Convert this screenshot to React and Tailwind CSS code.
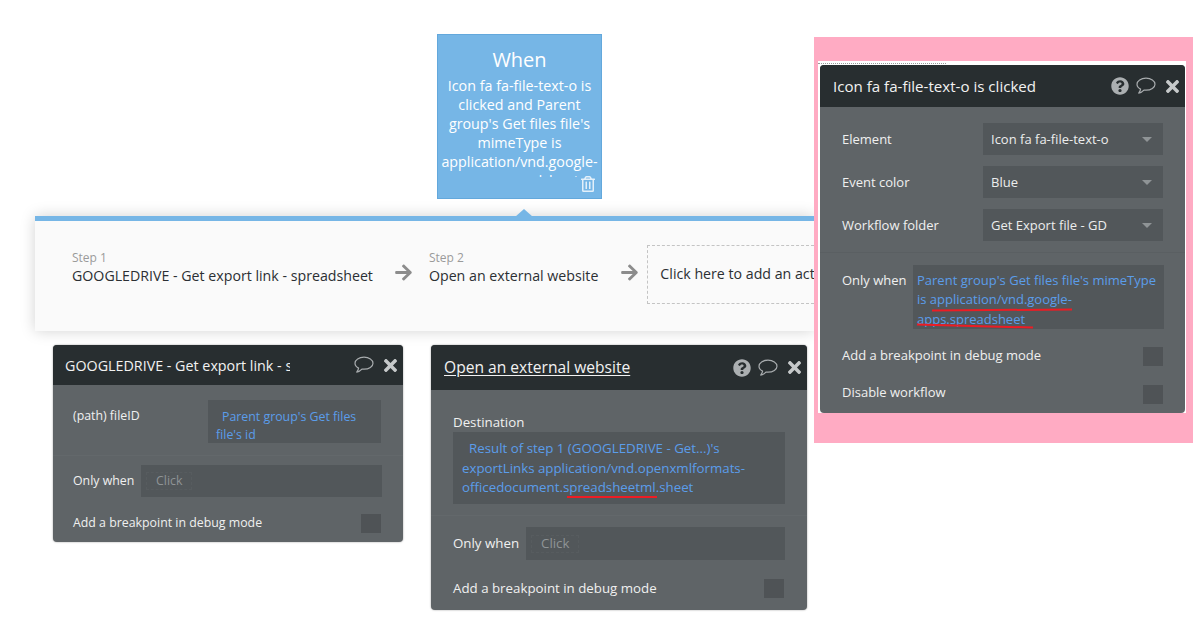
import React from "react";
import { FaQuestionCircle, FaTimes, FaArrowRight, FaRegTrashAlt } from "react-icons/fa";

const font = "font-['Open_Sans','Noto_Sans',sans-serif]";

function Bubble() {
  return (
    <svg width="20" height="18" viewBox="0 0 20 18" fill="none" className="shrink-0">
      <path
        d="M10 1.2C5 1.2 1 3.8 1 7.2c0 2 1.4 3.8 3.6 4.9-.2 1.4-1 2.9-1.900 4 2-.4 3.900-1.500 5.200-3 .7.100 1.400.100 2.100.100 5 0 9-2.700 9-6S15 1.200 10 1.200z"
        stroke="#a7abad"
        strokeWidth="1.2"
        strokeLinejoin="round"
      />
    </svg>
  );
}

function HeaderIcons({ help }) {
  return (
    <div className="flex items-center gap-[7px]">
      {help && <FaQuestionCircle className="text-[18px] text-[#abafb1]" />}
      <Bubble />
      <FaTimes className="text-[19px] text-[#c6c9ca]" />
    </div>
  );
}

function Check() {
  return <div className="w-[20px] h-[19px] bg-[#4f5356] shrink-0" />;
}

function Select({ children }) {
  return (
    <div className="w-[180px] h-[32px] bg-[#52575a] flex items-center justify-between pl-[8px] pr-[11px] text-[#eceded]">
      <span className="mt-[2px]">{children}</span>
      <span className="w-0 h-0 border-x-[5px] border-x-transparent border-t-[5px] border-t-[#8f9496]" />
    </div>
  );
}

function ClickField() {
  return (
    <div className="flex-1 bg-[#52575a] flex items-center pl-[5px] text-[#8f9496]">
      <span className="px-[9px] h-[18px] flex items-center border border-dashed border-[#575c5f]">Click</span>
    </div>
  );
}

function Redline({ className }) {
  return <span className={`absolute bg-[#ed1c24] ${className}`} />;
}

export default function App() {
  return (
    <div className={`relative w-[1200px] h-[623px] overflow-hidden bg-white ${font}`}>
      {/* Action bar */}
      <div className="absolute left-[35px] top-[216px] w-[779px] h-[115px] bg-[#fafafa] border-t-[5px] border-t-[#76b6e6] shadow-[0_0_14px_rgba(0,0,0,0.18)] flex items-start pl-[37px] pt-[29px] text-[14.2px] text-[#2b2f33]">
        <div>
          <div className="text-[12px] text-[#9a9a9a] leading-[15px]">Step 1</div>
          <div className="leading-[20px] mt-[1px] whitespace-nowrap">GOOGLEDRIVE - Get export link - spreadsheet</div>
        </div>
        <FaArrowRight className="text-[19px] text-[#8c8c8c] ml-[21px] mt-[13px] shrink-0" />
        <div className="ml-[16px]">
          <div className="text-[12px] text-[#9a9a9a] leading-[15px]">Step 2</div>
          <div className="leading-[20px] mt-[1px] whitespace-nowrap">Open an external website</div>
        </div>
        <FaArrowRight className="text-[19px] text-[#8c8c8c] ml-[22px] mt-[13px] shrink-0" />
        <div className="ml-[8px] -mt-[5px] flex-1 min-w-0 h-[59px] border border-dashed border-r-0 border-[#c4c4c4] flex items-center pl-[12px] pb-[2px] whitespace-nowrap overflow-hidden">
          Click here to add an action...
        </div>
      </div>

      {/* Arrow notch */}
      <span className="absolute left-[515px] top-[209px] w-0 h-0 border-x-[9px] border-x-transparent border-b-[8px] border-b-[#76b6e6]" />

      {/* When box */}
      <div className="absolute left-[437px] top-[34px] w-[165px] h-[165px] bg-[#76b6e6] border border-[#63a8dc] overflow-hidden text-center text-white">
        <div className="text-[20px] leading-[27px] mt-[11px]">When</div>
        <div className="text-[14.3px] leading-[19px] mt-[3px] h-[101px] overflow-hidden px-[2px]">
          Icon fa fa-file-text-o is clicked and Parent group's Get files file's mimeType is <span className="whitespace-nowrap">application/vnd.google-</span> apps.spreadsheet
        </div>
        <FaRegTrashAlt className="absolute right-[5px] bottom-[6px] text-[16px] text-[#e3f0fa]" />
      </div>

      {/* Left panel */}
      <div className="absolute left-[53px] top-[345px] w-[350px] h-[197px] rounded-[4px] bg-[#5f6467] shadow-[0_0_2px_rgba(0,0,0,0.4)] overflow-hidden text-[12.35px] text-[#f0f0f0] flex flex-col">
        <div className="h-[40px] bg-[#282e30] flex items-center justify-between pl-[12px] pr-[3px] shrink-0">
          <div className="w-[225px] mt-[1px] overflow-hidden whitespace-nowrap text-[14.3px] text-[#f2f2f2]">GOOGLEDRIVE - Get export link - spreadsheet</div>
          <HeaderIcons />
        </div>
        <div className="flex items-start pl-[20px] pr-[22px] pt-[15px] pb-[12px] border-b border-[#63686b]">
          <div className="w-[135px] leading-[30px] mt-[1px] -mb-[1px]">(path) fileID</div>
          <div className="flex-1 min-w-0 h-[43px] bg-[#52575a] text-[#5b9dea] leading-[18px] pl-[8px] pt-[8px] whitespace-nowrap">
            <span className="pl-[6px]">Parent group's Get files</span>
            <br />
            file's id
          </div>
        </div>
        <div className="flex pl-[20px] pr-[21px] pt-[9px] h-[41px]">
          <div className="w-[68px] h-[32px] pt-[1px] flex items-center shrink-0">Only when</div>
          <ClickField />
        </div>
        <div className="flex items-center justify-between pl-[20px] pr-[22px] mt-[17px]">
          <span>Add a breakpoint in debug mode</span>
          <Check />
        </div>
      </div>

      {/* Middle panel */}
      <div className="absolute left-[431px] top-[345px] w-[376px] h-[265px] rounded-[4px] bg-[#5f6467] shadow-[0_0_2px_rgba(0,0,0,0.4)] overflow-hidden text-[13.3px] text-[#f0f0f0] flex flex-col">
        <div className="h-[45px] bg-[#282e30] flex items-center justify-between pl-[13px] pr-[3px] shrink-0">
          <div className="text-[15.6px] mt-[1px] underline underline-offset-2 text-[#f2f2f2]">Open an external website</div>
          <HeaderIcons help />
        </div>
        <div className="px-[22px] pt-[22px] pb-[11px] border-b border-[#63686b]">
          <div className="leading-[20px]">Destination</div>
          <div className="relative h-[72px] bg-[#52575a] text-[#5b9dea] leading-[19.5px] pl-[9px] pt-[7px] whitespace-nowrap">
            <span className="pl-[7px]">Result of step 1 (GOOGLEDRIVE - Get...)'s</span>
            <br />
            exportLinks application/vnd.openxmlformats-
            <br />
            officedocument.spreadsheetml.sheet
            <Redline className="left-[114px] top-[64px] w-[90px] h-[2px]" />
          </div>
        </div>
        <div className="flex pl-[22px] pr-[22px] pt-[11px]">
          <div className="w-[73px] h-[33px] flex items-center shrink-0">Only when</div>
          <ClickField />
        </div>
        <div className="flex items-center justify-between pl-[22px] pr-[23px] mt-[19px]">
          <span>Add a breakpoint in debug mode</span>
          <Check />
        </div>
      </div>

      {/* Pink highlight with right panel */}
      <div className="absolute left-[814px] top-[37px] w-[379px] h-[406px] bg-[#ffabc3]">
        <div className="absolute left-[4px] top-[24px] w-[368px] h-[352px] bg-white">
          <div className="w-[128px] mt-[2px] border-t border-dotted border-[#9a9a9a]" />
        </div>
        <div className="absolute left-[6px] top-[28px] w-[365px] h-[348px] rounded-[4px] bg-[#5f6467] overflow-hidden text-[13px] text-[#f0f0f0] flex flex-col">
          <div className="h-[42px] bg-[#282e30] flex items-center justify-between pl-[13px] pr-[3px] shrink-0">
            <div className="text-[15.1px] mt-[1px] text-[#f2f2f2]">Icon fa fa-file-text-o is clicked</div>
            <HeaderIcons help />
          </div>
          <div className="flex flex-col gap-[11px] pl-[22px] pr-[22px] pt-[16px] pb-[11px] border-b border-[#5a5f62]">
            {[
              ["Element", "Icon fa fa-file-text-o"],
              ["Event color", "Blue"],
              ["Workflow folder", "Get Export file - GD"],
            ].map(([label, value]) => (
              <div key={label} className="flex items-center justify-between">
                <span className="mt-[1px]">{label}</span>
                <Select>{value}</Select>
              </div>
            ))}
          </div>
          <div className="flex pl-[22px] pr-[21px] pt-[12px]">
            <div className="w-[71px] pt-[6px] leading-[18px] shrink-0">Only when</div>
            <div className="relative flex-1 min-w-0 h-[64px] bg-[#52575a] text-[#5b9dea] leading-[19.3px] pl-[4px] pt-[6px] whitespace-nowrap">
              Parent group's Get files file's mimeType
              <br />
              is application/vnd.google-
              <br />
              apps.spreadsheet
              <Redline className="left-[19px] top-[44px] w-[140px] h-[2px] rotate-[-0.5deg]" />
              <Redline className="left-[4px] top-[60px] w-[116px] h-[2px] rotate-[1.5deg]" />
            </div>
          </div>
          <div className="flex items-center justify-between pl-[22px] pr-[22px] mt-[18px]">
            <span className="-mt-[1px]">Add a breakpoint in debug mode</span>
            <Check />
          </div>
          <div className="flex items-center justify-between pl-[22px] pr-[22px] mt-[19px]">
            <span className="-mt-[3px]">Disable workflow</span>
            <Check />
          </div>
        </div>
      </div>
    </div>
  );
}
